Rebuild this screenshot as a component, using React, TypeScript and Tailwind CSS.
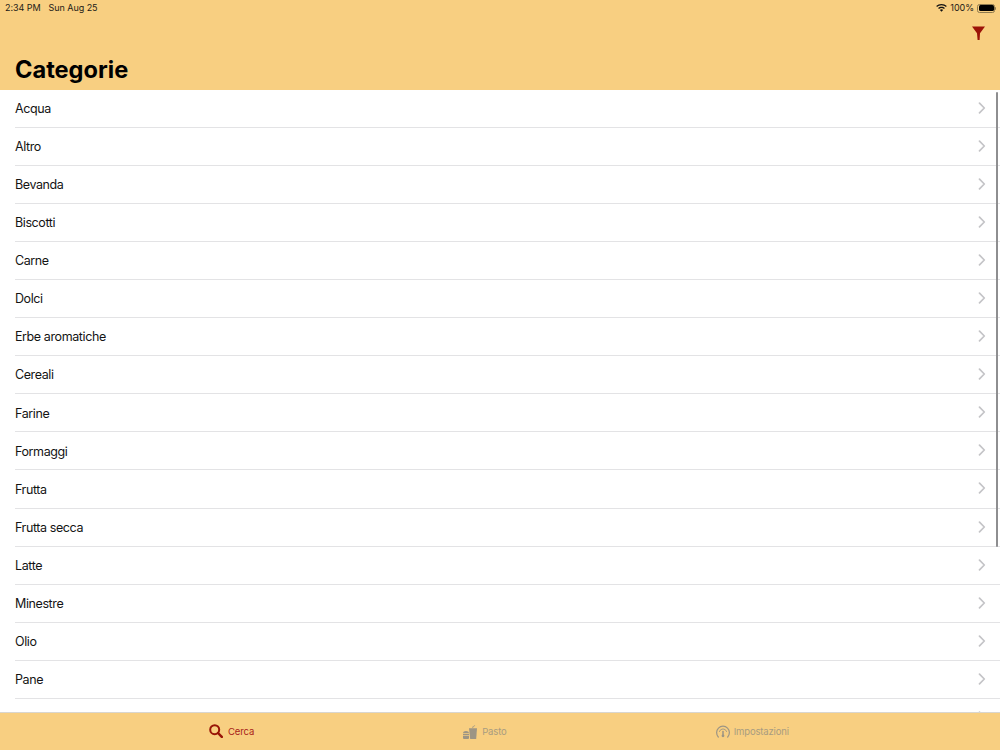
const rows = ["Acqua","Altro","Bevanda","Biscotti","Carne","Dolci","Erbe aromatiche","Cereali","Farine","Formaggi","Frutta","Frutta secca","Latte","Minestre","Olio","Pane","Pasta"];

function Chevron() {
  return (
    <svg className="-mt-[1px]" width="8" height="12" viewBox="0 0 8 12" fill="none" stroke="#c4c4c7" strokeWidth="1.7" strokeLinecap="round" strokeLinejoin="round">
      <path d="M1.500 1.200 6.300 6 1.500 10.800" />
    </svg>
  );
}

export default function App() {
  return (
    <div className="flex h-[750px] w-[1000px] flex-col overflow-hidden bg-white font-['Inter',sans-serif] text-black">
      <header className="flex h-[90px] shrink-0 flex-col bg-[#f8cf81]">
        <div className="flex h-[15px] shrink-0 items-center justify-between pl-[5px] pr-[4px] pt-[1px] text-[9px] tracking-[-0.05px] text-[#1c1b17]">
          <div className="flex gap-[8px]">
            <span>2:34 PM</span>
            <span>Sun Aug 25</span>
          </div>
          <div className="flex items-center gap-[3px]">
            <svg width="11" height="8" viewBox="0 0 11 8" fill="#111">
              <path d="M5.500 0C3.400 0 1.600.8.200 2.100l.9 1C2.200 2 3.800 1.300 5.500 1.300S8.800 2 9.900 3.100l.9-1C9.400.8 7.600 0 5.500 0Z" />
              <path d="M5.500 2.700c-1.300 0-2.500.5-3.400 1.400l.9 1c.7-.7 1.500-1 2.500-1s1.800.3 2.500 1l.9-1c-.9-.9-2.100-1.400-3.400-1.400Z" />
              <path d="M5.500 5.300c-.7 0-1.200.2-1.600.6L5.500 7.800l1.600-1.900c-.4-.4-.9-.6-1.600-.6Z" />
            </svg>
            <span>100%</span>
            <div className="flex items-center">
              <div className="flex h-[9px] w-[18px] rounded-[2.500px] border border-[#8f7a4e] p-[0.5px]">
                <div className="h-full w-full rounded-[1.500px] bg-black" />
              </div>
              <div className="h-[3px] w-[1px] rounded-r-sm bg-[#8f7a4e]" />
            </div>
          </div>
        </div>
        <div className="flex h-[33px] shrink-0 items-center justify-end pr-[15px] pt-[3px]">
          <svg width="13" height="14" viewBox="0 0 13 14" fill="#9c1308">
            <path d="M0 .5h13L8 7.200 7.600 14H5.600L5 7.200Z" />
          </svg>
        </div>
        <h1 className="pl-[15px] pt-[2px] text-[23.600px] font-bold leading-[40px]">Categorie</h1>
      </header>

      <main className="relative min-h-0 flex-1 overflow-hidden">
        {rows.map((r) => (
          <div key={r} className="flex h-[38.060px] items-center justify-between pl-[15px]">
            <div className="flex h-full w-full items-center justify-between border-b border-[#e3e3e5] pr-[14px] text-[12.500px] tracking-[-0.400px] text-[#141414]">
              <span className="pt-[2px]">{r}</span>
              <Chevron />
            </div>
          </div>
        ))}
        <div className="absolute right-[2px] top-[2px] h-[455px] w-[2.500px] rounded-full bg-[#8e8e90]" />
      </main>

      <footer className="flex h-[38px] shrink-0 items-center justify-evenly border-t border-[#d9d6cf] bg-[#f8cf81] pr-[2px] text-[9.500px] tracking-[-0.150px]">
        <div className="flex items-center gap-[5px] text-[#a8231a]">
          <svg className="-mt-[1px]" width="14" height="14" viewBox="0 0 14 14" fill="none" stroke="#991507" strokeWidth="2" strokeLinecap="round">
            <circle cx="5.700" cy="5.700" r="4.500" />
            <path d="M9 9l3.800 3.900" strokeWidth="2.500" />
          </svg>
          <span className="pt-[2px]">Cerca</span>
        </div>
        <div className="flex items-center gap-[5px] text-[#a89c80]">
          <svg width="14" height="14" viewBox="0 0 14 14" fill="#9d9584">
            <path d="M6 3.200h8L13.200 14H7.200Z" />
            <path d="M9.400 3V1.800L11.800.2l.4.6-2 1.300V3Z" />
            <path d="M0 8.300C0 6.900 1.500 6 3 6s3 .9 3 2.300Z" />
            <rect x="0" y="9" width="6" height="1.300" />
            <path d="M0 11h6v2a1 1 0 0 1-1 1H1a1 1 0 0 1-1-1Z" />
          </svg>
          <span className="pt-[2px]">Pasto</span>
        </div>
        <div className="flex items-center gap-[4px] text-[#a89c80]">
          <svg width="14" height="13" viewBox="0 0 14 13" fill="none" stroke="#9d9584" strokeWidth="1.200" strokeLinecap="round">
            <path d="M2.300 12C1.200 10.800.6 9.300.6 7.600a6.400 6.400 0 0 1 12.800 0c0 1.700-.6 3.200-1.700 4.400" />
            <path d="M3.400 6.500a3.800 3.800 0 0 1 7.200 0" strokeWidth="0.900" />
            <path d="M7 6.500v4" strokeWidth="1.500" />
            <circle cx="7" cy="10.800" r="0.800" fill="#9d9584" />
          </svg>
          <span className="pt-[2px]">Impostazioni</span>
        </div>
      </footer>
    </div>
  );
}
